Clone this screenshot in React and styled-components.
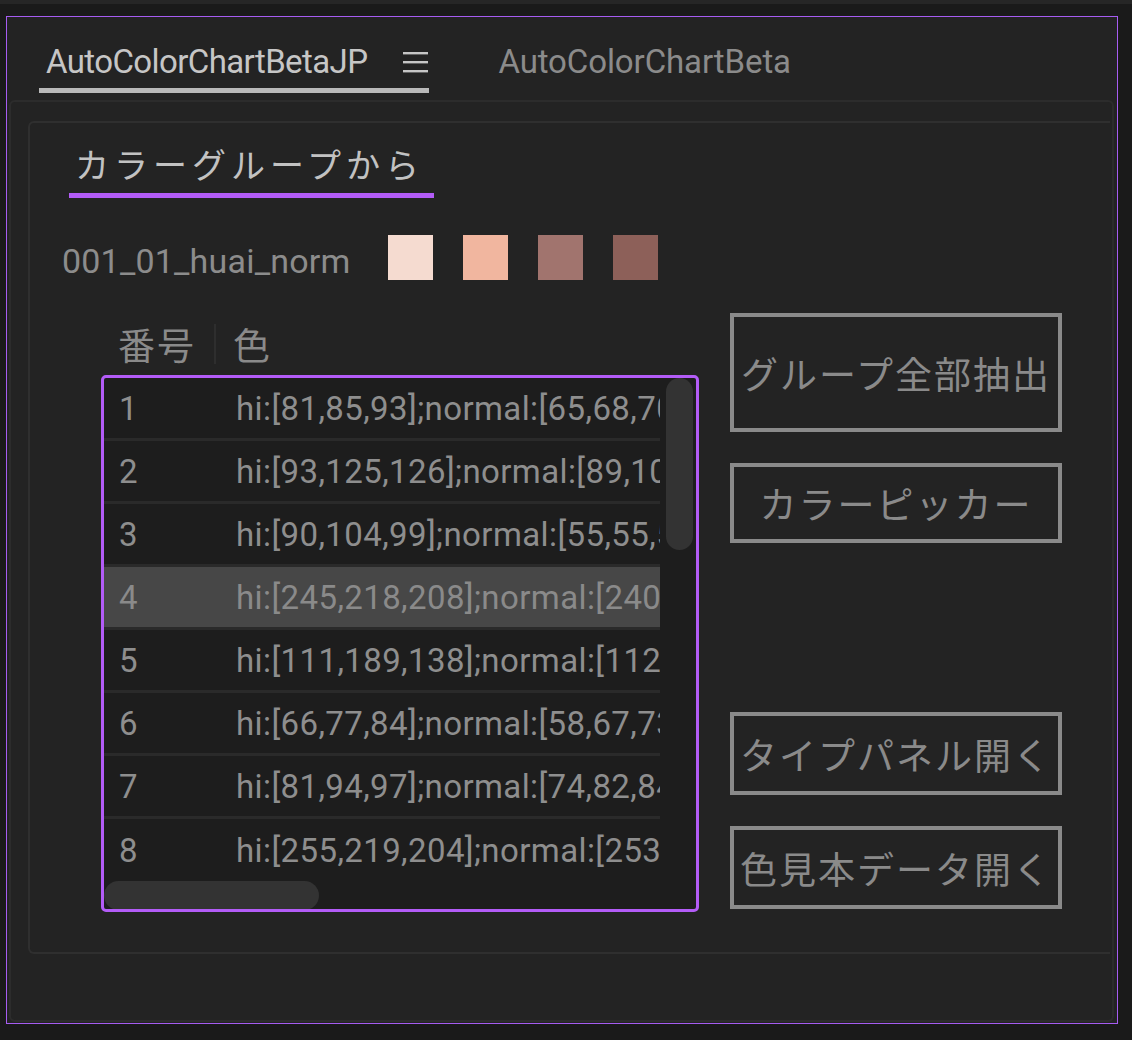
import React from "react";
import styled, { createGlobalStyle } from "styled-components";

const GlobalStyle = createGlobalStyle`
  html, body {
    margin: 0;
    padding: 0;
    background: #1a1a1a;
    width: 1132px;
    height: 1040px;
    overflow: hidden;
  }
  * { box-sizing: border-box; }
`;

const LATIN = `Roboto, "Noto Sans CJK JP", sans-serif`;
const CJK = `"Noto Sans CJK JP", sans-serif`;

const TopStrip = styled.div`
  height: 4px;
  background: #262626;
`;
const Frame = styled.div`
  margin: 12px 0 0 6px;
  width: 1112px;
  height: 1008px;
  border: 1px solid #a65cf2;
  background: #232323;
  display: flex;
  flex-direction: column;
`;
const TabBar = styled.div`
  height: 83px;
  flex-shrink: 0;
  display: flex;
  align-items: flex-end;
  padding: 0 0 7px 32px;
`;
const Tab = styled.div`
  display: flex;
  align-items: center;
  padding: 0 1px 6px 7px;
  margin-left: ${(p) => p.offset || 0}px;
  border-bottom: 5px solid ${(p) => (p.active ? "#b9b9b9" : "transparent")};
`;
const TabLabel = styled.span`
  font-family: ${LATIN};
  font-size: 33px;
  line-height: 40px;
  letter-spacing: ${(p) => (p.active ? "-0.6px" : "-0.1px")};
  color: ${(p) => (p.active ? "#c6c6c6" : "#8b8b8b")};
`;
const MenuIcon = styled.svg`
  margin-left: 36px;
  display: block;
`;
const Panel = styled.div`
  flex: 1;
  margin: 0 3px 1px 2px;
  border: 2px solid #2c2c2c;
  border-radius: 6px;
  padding: 19px 2px 0 17px;
`;
const GroupBox = styled.div`
  height: 833px;
  border: 2px solid #2f2f2f;
  border-right: none;
  border-radius: 6px 0 0 6px;
  display: flex;
  flex-direction: column;
`;
const Heading = styled.div`
  align-self: flex-start;
  margin: 19px 0 0 39px;
  width: 365px;
  padding: 0 0 7px 6px;
  border-bottom: 5px solid #b35cf7;
  font-family: ${CJK};
  font-size: 34px;
  line-height: 44px;
  letter-spacing: 5px;
  color: #c2c2c2;
  white-space: nowrap;
`;
const NameRow = styled.div`
  display: flex;
  align-items: center;
  margin: 37px 0 0 32px;
  height: 45px;
`;
const GroupName = styled.span`
  font-family: ${LATIN};
  font-size: 34px;
  line-height: 40px;
  letter-spacing: 0.2px;
  color: #8c8c8c;
  margin-right: 37px;
  margin-top: 6px;
`;
const Swatch = styled.div`
  width: 45px;
  height: 45px;
  margin-right: 30px;
  background: ${(p) => p.color};
`;
const Content = styled.div`
  display: flex;
  margin: 33px 0 0 71px;
`;
const TableColumn = styled.div`
  width: 598px;
  display: flex;
  flex-direction: column;
`;
const HeaderRow = styled.div`
  height: 62px;
  display: flex;
  align-items: center;
  padding: 0 0 0 17px;
`;
const HeaderCell = styled.span`
  font-family: ${CJK};
  font-size: 37px;
  line-height: 44px;
  letter-spacing: 2px;
  color: #8a8a8a;
`;
const HeaderDivider = styled.div`
  width: 2px;
  height: 40px;
  background: #2e2e2e;
  margin: 0 17px 0 18px;
`;
const TableBox = styled.div`
  height: 537px;
  border: 3px solid #b35cf7;
  border-radius: 5px;
  background: #1d1d1d;
  display: grid;
  grid-template-columns: 556px 1fr;
  grid-template-rows: 502px 1fr;
  overflow: hidden;
`;
const Rows = styled.div`
  grid-column: 1;
  grid-row: 1;
  overflow: hidden;
`;
const Row = styled.div`
  height: 63px;
  display: flex;
  align-items: center;
  white-space: nowrap;
  background: ${(p) => (p.selected ? "#474747" : "transparent")};
  border-bottom: 3px solid #2a2a2a;
  font-family: ${LATIN};
  font-size: 33px;
  color: ${(p) => (p.selected ? "#8a8a8a" : "#8e8e8e")};
  &:last-child {
    border-bottom: none;
  }
`;
const NumCell = styled.span`
  width: 132px;
  flex-shrink: 0;
  padding-left: 15px;
`;
const ValueCell = styled.span`
  letter-spacing: 0.4px;
`;
const VTrack = styled.div`
  grid-column: 2;
  grid-row: 1 / 3;
  padding: 0 3px 0 6px;
`;
const VThumb = styled.div`
  height: 172px;
  border-radius: 14px;
  background: #333333;
`;
const HTrack = styled.div`
  grid-column: 1;
  grid-row: 2;
  padding: 1px 0 0 0;
  display: flex;
  align-items: flex-end;
`;
const HThumb = styled.div`
  width: 215px;
  height: 29px;
  border-radius: 15px;
  background: #333333;
`;
const ButtonColumn = styled.div`
  width: 332px;
  margin-left: 31px;
  padding-bottom: 3px;
  display: flex;
  flex-direction: column;
`;
const ActionButton = styled.button`
  height: ${(p) => p.h}px;
  margin-top: ${(p) => p.gap || 0}px;
  border: 4px solid #8a8a8a;
  background: transparent;
  padding: 0;
  display: flex;
  align-items: center;
  justify-content: center;
  font-family: ${CJK};
  font-size: 37px;
  letter-spacing: 2px;
  color: #8a8a8a;
  white-space: nowrap;
  overflow: hidden;
`;
const Spacer = styled.div`
  flex: 1;
`;

const swatches = ["#f5dbd0", "#f1b69f", "#a1746e", "#8d6059"];

const rows = [
  "hi:[81,85,93];normal:[65,68,70];low:[40,42,45]",
  "hi:[93,125,126];normal:[89,101,105];low:[50,60,62]",
  "hi:[90,104,99];normal:[55,55,55];low:[30,30,30]",
  "hi:[245,218,208];normal:[240,180,158];low:[160,116,110]",
  "hi:[111,189,138];normal:[112,150,120];low:[60,90,70]",
  "hi:[66,77,84];normal:[58,67,73];low:[30,36,40]",
  "hi:[81,94,97];normal:[74,82,84];low:[40,45,48]",
  "hi:[255,219,204];normal:[253,190,170];low:[170,120,110]",
];

const App = () => {
  return (
    <>
      <GlobalStyle />
      <TopStrip />
      <Frame>
        <TabBar>
          <Tab active>
            <TabLabel active>AutoColorChartBetaJP</TabLabel>
            <MenuIcon width="25" height="21" viewBox="0 0 25 21">
              <rect x="0" y="0" width="25" height="2.4" fill="#c6c6c6" />
              <rect x="0" y="9" width="25" height="2.4" fill="#c6c6c6" />
              <rect x="0" y="18" width="25" height="2.4" fill="#c6c6c6" />
            </MenuIcon>
          </Tab>
          <Tab offset={62}>
            <TabLabel>AutoColorChartBeta</TabLabel>
          </Tab>
        </TabBar>
        <Panel>
          <GroupBox>
            <Heading>カラーグループから</Heading>
            <NameRow>
              <GroupName>001_01_huai_norm</GroupName>
              {swatches.map((c) => (
                <Swatch key={c} color={c} />
              ))}
            </NameRow>
            <Content>
              <TableColumn>
                <HeaderRow>
                  <HeaderCell>番号</HeaderCell>
                  <HeaderDivider />
                  <HeaderCell>色</HeaderCell>
                </HeaderRow>
                <TableBox>
                  <Rows>
                    {rows.map((r, idx) => (
                      <Row key={idx} selected={idx === 3}>
                        <NumCell>{idx + 1}</NumCell>
                        <ValueCell>{r}</ValueCell>
                      </Row>
                    ))}
                  </Rows>
                  <VTrack>
                    <VThumb />
                  </VTrack>
                  <HTrack>
                    <HThumb />
                  </HTrack>
                </TableBox>
              </TableColumn>
              <ButtonColumn>
                <ActionButton h={119}>グループ全部抽出</ActionButton>
                <ActionButton h={80} gap={31}>
                  カラーピッカー
                </ActionButton>
                <Spacer />
                <ActionButton h={83}>タイプパネル開く</ActionButton>
                <ActionButton h={83} gap={31}>
                  色見本データ開く
                </ActionButton>
              </ButtonColumn>
            </Content>
          </GroupBox>
        </Panel>
      </Frame>
    </>
  );
};

export default App;
